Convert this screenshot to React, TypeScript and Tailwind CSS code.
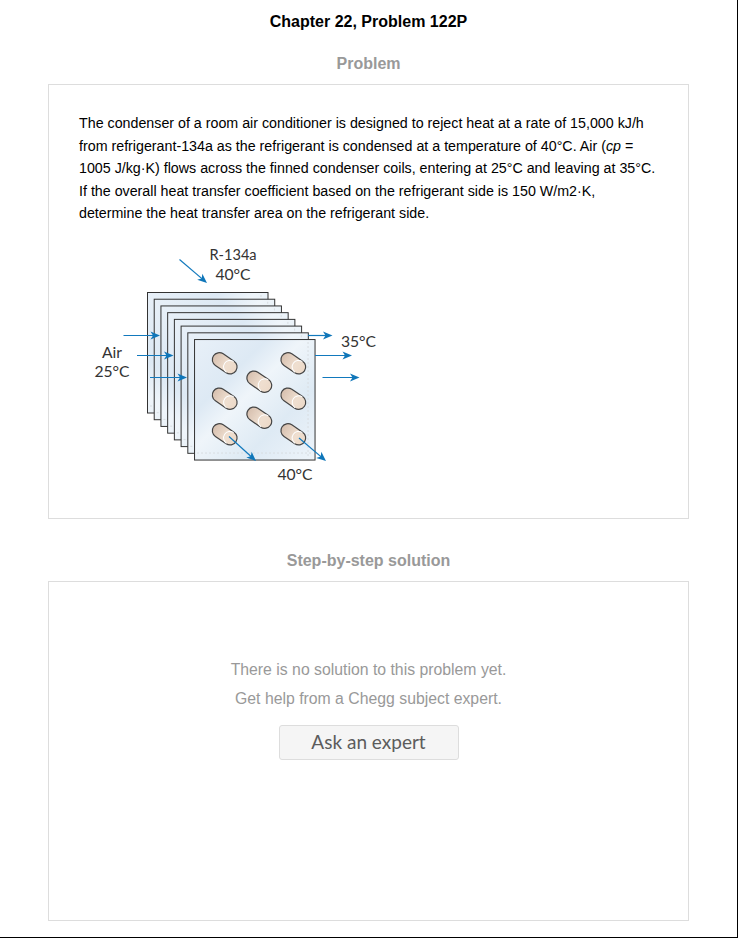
const sans = "font-['Liberation_Sans',Arial,sans-serif]"

const plates = [0, 1, 2, 3, 4, 5, 6, 7]
const capsules = [
  [144.7, 123.3],
  [213.3, 123.3],
  [179.3, 141.7],
  [144.7, 158.7],
  [213.3, 158.7],
  [179.3, 177.7],
  [144.7, 194.3],
  [213.3, 194.3],
]

function Arrow({ x1, y1, x2, y2 }: { x1: number; y1: number; x2: number; y2: number }) {
  const a = Math.atan2(y2 - y1, x2 - x1)
  const pt = (d: number, s: number) =>
    `${x2 - d * Math.cos(a) - s * Math.sin(a)},${y2 - d * Math.sin(a) + s * Math.cos(a)}`
  return (
    <g>
      <line x1={x1} y1={y1} x2={x2 - 4 * Math.cos(a)} y2={y2 - 4 * Math.sin(a)} stroke="#1279bd" strokeWidth="1.2" />
      <polygon points={`${x2},${y2} ${pt(9.5, 4)} ${pt(7, 0)} ${pt(9.5, -4)}`} fill="#0f76b9" />
    </g>
  )
}

function Capsule({ cx, cy }: { cx: number; cy: number }) {
  return (
    <g transform={`translate(${cx} ${cy}) rotate(34)`}>
      <rect x="-13.5" y="-7" width="27" height="14" rx="7" fill="url(#cap)" stroke="#444444" strokeWidth="1.2" />
      <path d="M6.5 -6.5 A6.5 6.5 0 0 0 6.5 6.5" fill="none" stroke="#ffffff" strokeWidth="1" />
    </g>
  )
}

function Condenser() {
  return (
    <svg width="300" height="250" viewBox="0 0 300 250" className="block ml-px mt-[15px]">
      <defs>
        <linearGradient id="plate" x1="0" y1="0" x2="1" y2="1">
          <stop offset="0" stopColor="#e8f0f8" />
          <stop offset="0.3" stopColor="#dde9f4" />
          <stop offset="0.45" stopColor="#eff5fa" />
          <stop offset="0.7" stopColor="#deeaf4" />
          <stop offset="1" stopColor="#eef4fa" />
        </linearGradient>
        <linearGradient id="cap" x1="0" y1="0" x2="1" y2="0">
          <stop offset="0" stopColor="#d6bfae" />
          <stop offset="0.6" stopColor="#efdfd0" />
          <stop offset="1" stopColor="#ecd9c8" />
        </linearGradient>
      </defs>

      {plates.map((i) => (
        <g key={i}>
          <rect
            x={67.5 + i * 6.72}
            y={52.5 + i * 6.72}
            width="120.5"
            height="120.5"
            fill="url(#plate)"
            stroke="#333333"
            strokeWidth="1"
          />
          <line
            x1={70 + i * 6.72}
            y1={166 + i * 6.72}
            x2={185 + i * 6.72}
            y2={166 + i * 6.72}
            stroke="#d8dde1"
            strokeWidth="1"
            strokeDasharray="2 2"
          />
          <line
            x1={181 + i * 6.72}
            y1={55 + i * 6.72}
            x2={181 + i * 6.72}
            y2={170 + i * 6.72}
            stroke="#d8dde1"
            strokeWidth="1"
            strokeDasharray="2 2"
          />
        </g>
      ))}

      {capsules.map(([cx, cy]) => (
        <Capsule key={`${cx}-${cy}`} cx={cx} cy={cy} />
      ))}

      <Arrow x1={99.5} y1={19.5} x2={127} y2={43} />
      <Arrow x1={43.5} y1={95.5} x2={80} y2={95.5} />
      <Arrow x1={57} y1={115.5} x2={93.5} y2={115.5} />
      <Arrow x1={70} y1={137.5} x2={107} y2={137.5} />
      <Arrow x1={228} y1={95.5} x2={252.5} y2={95.5} />
      <Arrow x1={235} y1={115.5} x2={272} y2={115.5} />
      <Arrow x1={242.5} y1={137.5} x2={279.5} y2={137.5} />
      <Arrow x1={149} y1={196.5} x2={176} y2={221} />
      <Arrow x1={219} y1={198} x2={246} y2={221} />

      <g fontFamily="Lato, 'Open Sans', sans-serif" fontSize="15.7" fill="#333333" textAnchor="middle">
        <text x="153" y="20" fontSize="14.6">R-134a</text>
        <text x="153" y="40">40°C</text>
        <text x="32" y="118">Air</text>
        <text x="32" y="137">25°C</text>
        <text x="278.5" y="107">35°C</text>
        <text x="215" y="240">40°C</text>
      </g>
    </svg>
  )
}

export default function App() {
  return (
    <div className={`w-[738px] h-[938px] bg-white border-r border-b border-black ${sans}`}>
      <h1 className="h-[44px] flex items-center justify-center text-[16px] font-bold text-black">
        Chapter 22, Problem 122P
      </h1>

      <h2 className="h-[40px] flex items-center justify-center text-[16px] font-bold text-[#999999]">
        Problem
      </h2>
      <div className="ml-[48px] w-[641px] h-[435px] border border-[#dddddd] pl-[30px] pt-[27px]">
        <p className="text-[14.25px] leading-[22.5px] text-black">
          The condenser of a room air conditioner is designed to reject heat at a rate of 15,000 kJ/h
          <br />
          from refrigerant-134a as the refrigerant is condensed at a temperature of 40°C. Air (<i>cp</i> =
          <br />
          1005 J/kg·K) flows across the finned condenser coils, entering at 25°C and leaving at 35°C.
          <br />
          If the overall heat transfer coefficient based on the refrigerant side is 150 W/m2·K,
          <br />
          determine the heat transfer area on the refrigerant side.
        </p>
        <Condenser />
      </div>

      <h2 className="mt-[22px] h-[40px] flex items-center justify-center text-[16px] font-bold text-[#999999]">
        Step-by-step solution
      </h2>
      <div className="ml-[48px] w-[641px] h-[340px] border border-[#dddddd] flex flex-col items-center pt-[73px]">
        <p className="text-[15.8px] leading-[29px] text-[#999999]">There is no solution to this problem yet.</p>
        <p className="text-[15.8px] leading-[29px] text-[#999999]">Get help from a Chegg subject expert.</p>
        <button className="mt-[12px] w-[180px] h-[35px] bg-[#f5f5f5] border border-[#dddddd] rounded-[3px] font-['Lato',sans-serif] text-[19px] text-[#5c5c5c]">
          Ask an expert
        </button>
      </div>
    </div>
  )
}
